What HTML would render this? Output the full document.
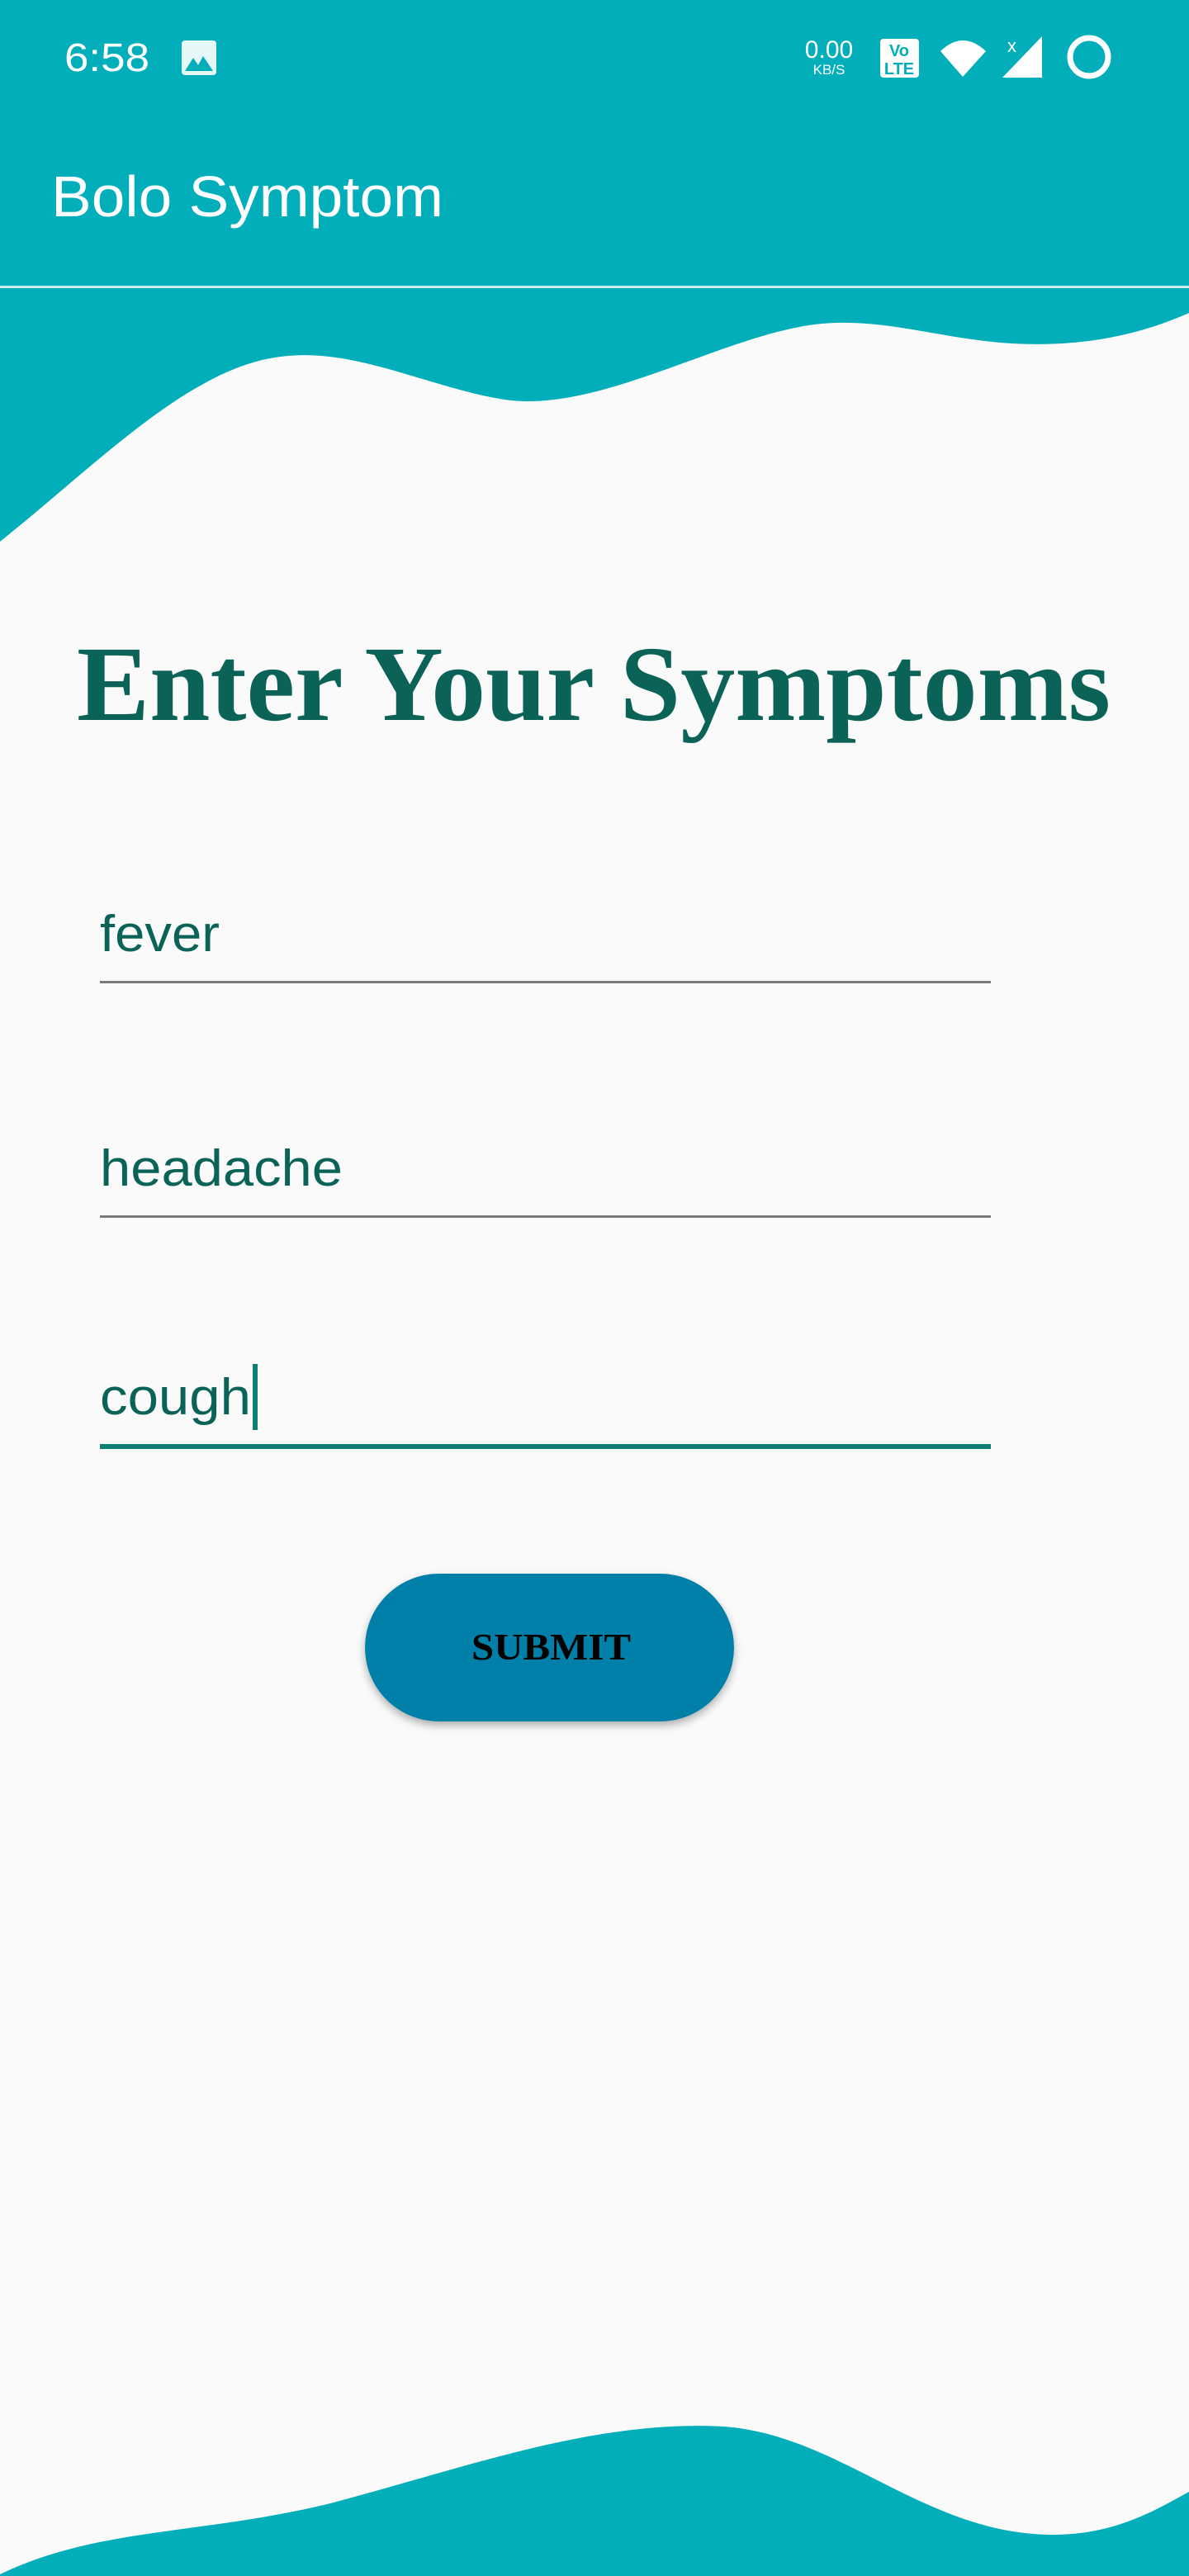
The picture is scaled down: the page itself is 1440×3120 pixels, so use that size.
<!DOCTYPE html>
<html><head><meta charset="utf-8"><style>
html,body{margin:0;padding:0;background:#fafafa;}
svg{display:block}
</style></head><body>
<svg width="1440" height="3120" viewBox="0 0 1440 3120" xmlns="http://www.w3.org/2000/svg">
<rect width="1440" height="3120" fill="#fafafa"/>
<rect width="1440" height="346" fill="#02aeba"/>
<rect y="346" width="1440" height="3" fill="#c8eef1"/>
<path d="M0 349 H1440 V379 C1370 410 1300 420 1226 416 C1130 410 1060 380 973 395 C860 415 720 500 611 484 C520 470 430 420 340 432 C230 445 120 560 0 656 Z" fill="#02aeba"/>
<path d="M0 3120 V3118 C120 3060 250 3070 404 3031 C560 2990 720 2930 877 2939 C1020 2950 1120 3070 1276 3070 C1350 3070 1400 3040 1440 3018 V3120 Z" fill="#02aeba"/>
<!-- status bar -->
<text x="78" y="86" font-family="Liberation Sans, sans-serif" font-size="48" fill="#fff" textLength="103" lengthAdjust="spacingAndGlyphs">6:58</text>
<rect x="220" y="49" width="42" height="42" rx="4" fill="#e6f7f8"/>
<path d="M224 86 L234 70 L240 79 L246 68 L258 86 Z" fill="#02aeba"/>
<text x="1004" y="70" text-anchor="middle" font-family="Liberation Sans, sans-serif" font-size="30" fill="#fff">0.00</text>
<text x="1004" y="90" text-anchor="middle" font-family="Liberation Sans, sans-serif" font-size="17" fill="#fff">KB/S</text>
<rect x="1066" y="47" width="47" height="47" rx="4" fill="#fff"/>
<text x="1089" y="68" text-anchor="middle" font-family="Liberation Sans, sans-serif" font-weight="bold" font-size="20" fill="#02aeba">Vo</text>
<text x="1089" y="90" text-anchor="middle" font-family="Liberation Sans, sans-serif" font-weight="bold" font-size="20" fill="#02aeba">LTE</text>
<path d="M1139 62 Q1166 36 1194 62 L1166 93 Z" fill="#fff"/>
<text x="1220" y="63" font-family="Liberation Sans, sans-serif" font-size="22" fill="#fff">x</text>
<path d="M1214 94 L1262 44 V94 Z" fill="#fff"/>
<circle cx="1319" cy="69" r="23" fill="none" stroke="#fff" stroke-width="7"/>
<text x="62" y="262" font-family="Liberation Sans, sans-serif" font-size="70" fill="#fff" textLength="475" lengthAdjust="spacingAndGlyphs">Bolo Symptom</text>
<!-- heading -->
<text x="93" y="872" font-family="Liberation Serif, serif" font-weight="bold" font-size="130" fill="#0b6358" textLength="1252" lengthAdjust="spacingAndGlyphs">Enter Your Symptoms</text>
<!-- inputs -->
<text x="121" y="1152" font-family="Liberation Sans, sans-serif" font-size="62" fill="#0b6358" textLength="145" lengthAdjust="spacingAndGlyphs">fever</text>
<rect x="121" y="1188" width="1079" height="3" fill="#7a7a7a"/>
<text x="121" y="1436" font-family="Liberation Sans, sans-serif" font-size="62" fill="#0b6358" textLength="294" lengthAdjust="spacingAndGlyphs">headache</text>
<rect x="121" y="1472" width="1079" height="3" fill="#7a7a7a"/>
<text x="121" y="1713" font-family="Liberation Sans, sans-serif" font-size="62" fill="#0b6358" textLength="183" lengthAdjust="spacingAndGlyphs">cough</text>
<rect x="306" y="1652" width="6" height="80" fill="#0d7f74"/>
<rect x="121" y="1749" width="1079" height="6" fill="#0d7f74"/>
<!-- button -->
<defs><filter id="sh" x="-20%" y="-20%" width="140%" height="160%"><feDropShadow dx="0" dy="5" stdDeviation="5" flood-color="#000" flood-opacity="0.3"/></filter></defs>
<rect x="442" y="1906" width="447" height="179" rx="89.5" fill="#0480a8" filter="url(#sh)"/>
<text x="571" y="2010" font-family="Liberation Serif, serif" font-weight="bold" font-size="46" fill="#000" textLength="193" lengthAdjust="spacingAndGlyphs">SUBMIT</text>
</svg>
</body></html>
